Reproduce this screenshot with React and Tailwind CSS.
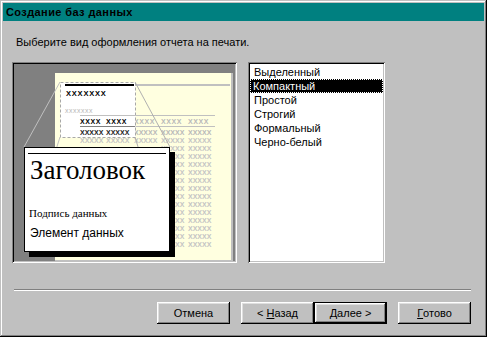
import React from 'react';

const font = { fontFamily: '"Liberation Sans", Arial, sans-serif' };
const serif = { fontFamily: '"Liberation Serif", "Times New Roman", serif' };

const styles = ['Выделенный', 'Компактный', 'Простой', 'Строгий', 'Формальный', 'Черно-белый'];

const bevel =
  'shadow-[inset_-1px_-1px_0_#000,inset_1px_1px_0_#fff,inset_-2px_-2px_0_#808080,inset_2px_2px_0_#dfdfdf]';
const sunken =
  'shadow-[inset_1px_1px_0_#808080,inset_-1px_-1px_0_#fff,inset_2px_2px_0_#000,inset_-2px_-2px_0_#c0c0c0]';

function Button({ children, isDefault }) {
  return (
    <div className={`h-[22px] w-[73px] bg-[#c0c0c0] ${isDefault ? 'border border-black' : ''}`}>
      <div className={`w-full h-full flex items-center justify-center text-[11px] text-black ${bevel}`}>
        {children}
      </div>
    </div>
  );
}

// grey report rows of the sample page
const cols = [66, 92, 120, 147, 174];
const rowYs = [];
for (let y = 79; y <= 183; y += 8) rowYs.push(y);

function Preview() {
  return (
    <div className={`relative w-[225px] h-[201px] bg-[#808080] p-[2px] ${sunken}`}>
      <div className="relative w-full h-full overflow-hidden">
        <svg width="221" height="197" className="absolute left-0 top-0" style={font}>
          {/* page */}
          <rect x="41" y="9" width="178" height="200" fill="#c0c0c0" />
          <rect x="41" y="9" width="176" height="187" fill="#ffffe0" />
          <rect x="121" y="20" width="95" height="2" fill="#c0c0c0" />
          <rect x="66" y="51" width="135" height="1" fill="#c0c0c0" />
          <rect x="66" y="62" width="135" height="1" fill="#c0c0c0" />
          {cols.slice(2).map((x, i) => (
            <text key={'h' + i} x={x} y="60" fontSize="7" fontWeight="bold" fill="#b8b8b8" letterSpacing="0.6">XXXX</text>
          ))}
          {cols.slice(2).map((x, i) => (
            <text key={'r' + i} x={x} y="71" fontSize="7" fontWeight="bold" fill="#b8b8b8">XXXXX</text>
          ))}
          {rowYs.map((y) =>
            (y < 84 ? cols : cols.slice(3)).map((x, i) => (
              <text key={y + '-' + i} x={x} y={y} fontSize="7" fontWeight="bold" fill="#c4c4c4">XXXXX</text>
            ))
          )}
          {/* connecting lines */}
          <line x1="46" y1="18" x2="10" y2="83" stroke="#c0c0c0" />
          <line x1="121" y1="18" x2="156" y2="83" stroke="#b0b0b0" />
          <line x1="46" y1="73" x2="10" y2="188" stroke="#c0c0c0" />
          <line x1="121" y1="73" x2="156" y2="188" stroke="#b0b0b0" />
          {/* zoomed region */}
          <rect x="46.5" y="18.5" width="75" height="55" fill="#fff" stroke="#a8a8a8" strokeDasharray="3 2" />
          <rect x="51" y="20" width="69" height="2" fill="#000" />
          <text x="52" y="32" fontSize="7.5" fontWeight="bold" fill="#000" letterSpacing="0.8">XXXXXXX</text>
          <text x="51" y="49" fontSize="7" fill="#b8b8b8" letterSpacing="0.5">xxxxxxx</text>
          <rect x="66" y="51" width="55" height="1" fill="#c0c0c0" />
          <rect x="66" y="62" width="55" height="1" fill="#808080" />
          <text x="66" y="60" fontSize="7" fontWeight="bold" fill="#000" letterSpacing="0.6">XXXX</text>
          <text x="92" y="60" fontSize="7" fontWeight="bold" fill="#000" letterSpacing="0.6">XXXX</text>
          <text x="66" y="71" fontSize="7" fontWeight="bold" fill="#222">XXXXX</text>
          <text x="92" y="71" fontSize="7" fontWeight="bold" fill="#222">XXXXX</text>
        </svg>
        {/* callout */}
        <div className="absolute left-[10px] top-[83px] w-[146px] h-[105px] bg-white border border-black shadow-[5px_5px_0_#000]">
          <div className="mx-[3px] mt-[5px] h-px bg-black" />
          <div className="ml-[5px] mt-[2px] text-[27px] leading-[28px] text-black" style={serif}>
            Заголовок
          </div>
          <div className="ml-[4px] mt-[23px] text-[11px] leading-[12px] text-black" style={serif}>
            Подпись данных
          </div>
          <div className="ml-[5px] mt-[7px] text-[12px] leading-[14px] text-black" style={font}>
            Элемент данных
          </div>
        </div>
      </div>
    </div>
  );
}

export default function App() {
  return (
    <div
      className="w-[487px] h-[337px] bg-[#c0c0c0] p-[3px] shadow-[inset_-1px_-1px_0_#000,inset_1px_1px_0_#c0c0c0,inset_-2px_-2px_0_#808080,inset_2px_2px_0_#fff] overflow-hidden"
      style={font}
    >
      {/* title bar */}
      <div className="h-[18px] bg-[#008080] flex items-center pl-[3px] text-[11px] font-bold tracking-[0.4px] text-black">
        Создание баз данных
      </div>

      <p className="mt-[15px] ml-[13px] text-[11px] leading-[13px] text-black">
        Выберите вид оформления отчета на печати.
      </p>

      <div className="mt-[13px] ml-[9px] flex gap-[11px]">
        <Preview />

        {/* list of styles */}
        <div className={`w-[137px] h-[201px] bg-white p-[2px] ${sunken}`}>
          <div className="pt-[1px]">
            {styles.map((s, i) => (
              <div
                key={s}
                className={`h-[14px] leading-[12px] text-[11px] border ${
                  i === 1 ? 'bg-black text-white border-dotted border-white pl-[2px]' : 'text-black border-transparent pl-[3px]'
                }`}
              >
                {s}
              </div>
            ))}
          </div>
        </div>
      </div>

      {/* separator */}
      <div className="mt-[26px] ml-[11px] w-[457px] h-[2px] border-t border-t-[#808080] border-b border-b-white" />

      {/* buttons */}
      <div className="mt-[11px] ml-[154px] flex">
        <Button>Отмена</Button>
        <div className="w-[11px]" />
        <Button>
          &lt; <span className="underline ml-[3px]">Н</span>азад
        </Button>
        <Button isDefault>
          <span className="underline">Д</span>алее &gt;
        </Button>
        <div className="w-[11px]" />
        <Button>
          <span className="underline">Г</span>отово
        </Button>
      </div>
    </div>
  );
}
